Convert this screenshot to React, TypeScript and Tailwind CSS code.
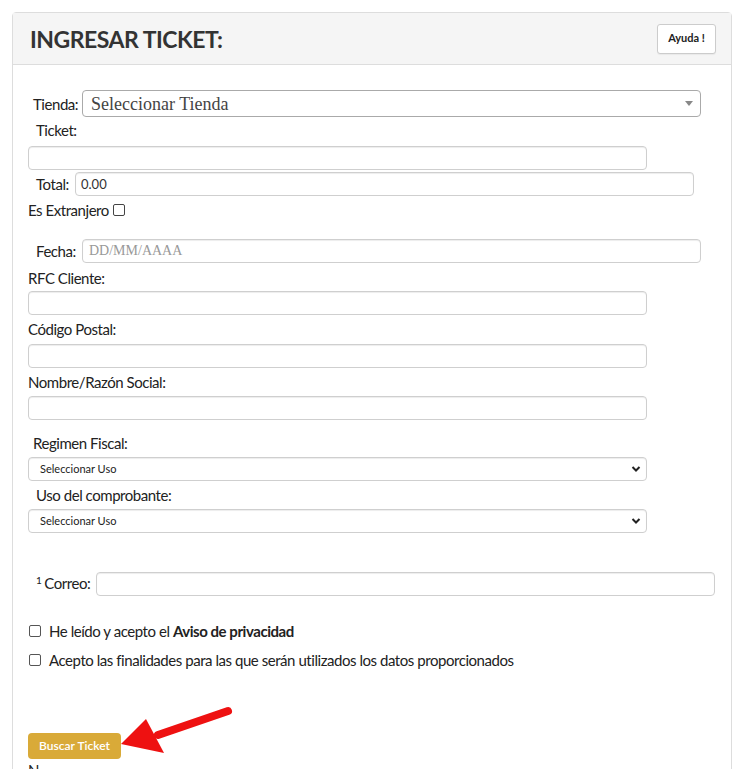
import React from "react";

const F = { fontFamily: "Lato, 'Open Sans', sans-serif" };

function Input({ className = "", children }: { className?: string; children?: React.ReactNode }) {
  return (
    <div
      className={`h-[24px] rounded-[4px] border border-[#cfcfcf] bg-white shadow-[inset_0_1px_1px_rgba(0,0,0,0.075)] flex items-center ${className}`}
    >
      {children}
    </div>
  );
}

function Chevron() {
  return (
    <svg width="10" height="8" viewBox="0 0 10 8" className="mr-[5px]">
      <path d="M1.5 2 L5 5.5 L8.5 2" fill="none" stroke="#222" strokeWidth="2" />
    </svg>
  );
}

function Check() {
  return <span className="inline-block w-[12px] h-[12px] border border-[#555] rounded-[2px] bg-white" />;
}

export default function App() {
  return (
    <div className="relative h-[769px] bg-white text-[#222] overflow-hidden" style={F}>
      <div className="ml-[12px] mt-[12px] w-[720px] border border-[#dddddd] rounded-[4px] h-[800px]">
        <div className="h-[52px] bg-[#f5f5f5] border-b border-[#dddddd] flex items-center justify-between pl-[17px] pr-[15px]">
          <div className="text-[23px] font-bold text-[#333] tracking-[-0.5px] mt-[1px]" style={F}>
            INGRESAR TICKET:
          </div>
          <div className="w-[59px] h-[30px] border border-[#cccccc] rounded-[3px] bg-white flex items-center justify-center text-[11px] font-bold text-[#222] shadow-[0_1px_1px_rgba(0,0,0,0.05)]">
            Ayuda !
          </div>
        </div>

        <div className="pl-[15px] pt-[25px] text-[15px] leading-[20px] tracking-[-0.45px]">
          {/* Tienda */}
          <div className="flex items-center h-[27px]">
            <span className="ml-[5px] w-[49px]">Tienda:</span>
            <div className="w-[619px] h-[27px] rounded-[4px] border border-[#aaaaaa] bg-white flex items-center justify-between">
              <span
                className="ml-[8px] text-[18px] tracking-normal text-[#444]"
                style={{ fontFamily: "'Liberation Serif', serif" }}
              >
                Seleccionar Tienda
              </span>
              <svg width="8" height="5" viewBox="0 0 8 5" className="mr-[7px]">
                <path d="M0 0 L8 0 L4 5 Z" fill="#888" />
              </svg>
            </div>
          </div>
          {/* Ticket */}
          <div className="ml-[8px] h-[20px] mt-[3px]">Ticket:</div>
          <Input className="w-[619px] mt-[6px]" />
          {/* Total */}
          <div className="flex items-center h-[24px] mt-[2px]">
            <span className="ml-[8px] w-[39px]">Total:</span>
            <Input className="w-[619px]">
              <span className="ml-[5px] text-[13px] tracking-normal text-[#333]">0.00</span>
            </Input>
          </div>
          <div className="flex items-center h-[20px] mt-[4px]">
            <span>Es Extranjero</span>
            <span className="ml-[4px] inline-block w-[12px] h-[12px] border border-[#444] rounded-[2px]" />
          </div>
          {/* Fecha */}
          <div className="flex items-center h-[24px] mt-[19px]">
            <span className="ml-[8px] w-[46px]">Fecha:</span>
            <Input className="w-[619px]">
              <span
                className="ml-[6px] text-[14px] tracking-normal text-[#999]"
                style={{ fontFamily: "'Liberation Serif', serif" }}
              >
                DD/MM/AAAA
              </span>
            </Input>
          </div>
          <div className="h-[20px] mt-[5px]">RFC Cliente:</div>
          <Input className="w-[619px] mt-[3px]" />
          <div className="h-[20px] mt-[4px]">Código Postal:</div>
          <Input className="w-[619px] mt-[5px]" />
          <div className="h-[20px] mt-[4px]">Nombre/Razón Social:</div>
          <Input className="w-[619px] mt-[4px]" />

          <div className="ml-[5px] h-[20px] mt-[13px]">Regimen Fiscal:</div>
          <Input className="w-[619px] mt-[4px] justify-between">
            <span className="ml-[11px] text-[11px] tracking-normal text-[#222]">Seleccionar Uso</span>
            <Chevron />
          </Input>
          <div className="ml-[8px] h-[20px] mt-[4px]">Uso del comprobante:</div>
          <Input className="w-[619px] mt-[4px] justify-between">
            <span className="ml-[11px] text-[11px] tracking-normal text-[#222]">Seleccionar Uso</span>
            <Chevron />
          </Input>

          {/* Correo */}
          <div className="flex items-center h-[24px] mt-[39px]">
            <span className="ml-[8px] w-[60px] relative">
              <span className="text-[10px] relative top-[-5px] mr-[3px]">1</span>Correo:
            </span>
            <Input className="w-[619px]" />
          </div>

          <div className="flex items-center h-[20px] mt-[25px]">
            <span className="ml-[1px] flex"><Check /></span>
            <span className="ml-[8px]">
              He leído y acepto el <b className="font-bold">Aviso de privacidad</b>
            </span>
          </div>
          <div className="flex items-center h-[20px] mt-[9px]">
            <span className="ml-[1px] flex"><Check /></span>
            <span className="ml-[8px]">Acepto las finalidades para las que serán utilizados los datos proporcionados</span>
          </div>

          <div className="mt-[63px] w-[93px] h-[26px] rounded-[4px] bg-[#d9aa38] text-white text-[12px] tracking-normal font-semibold flex items-center justify-center">
            Buscar Ticket
          </div>
          <div className="h-[20px] mt-[1px]">N</div>
        </div>
      </div>

      {/* red arrow */}
      <svg className="absolute left-0 top-0 pointer-events-none" width="745" height="769">
        <line x1="228" y1="711" x2="158" y2="735" stroke="#ee1111" strokeWidth="8" strokeLinecap="round" />
        <polygon points="121,744 146,719 164,753" fill="#ee1111" />
      </svg>
    </div>
  );
}
